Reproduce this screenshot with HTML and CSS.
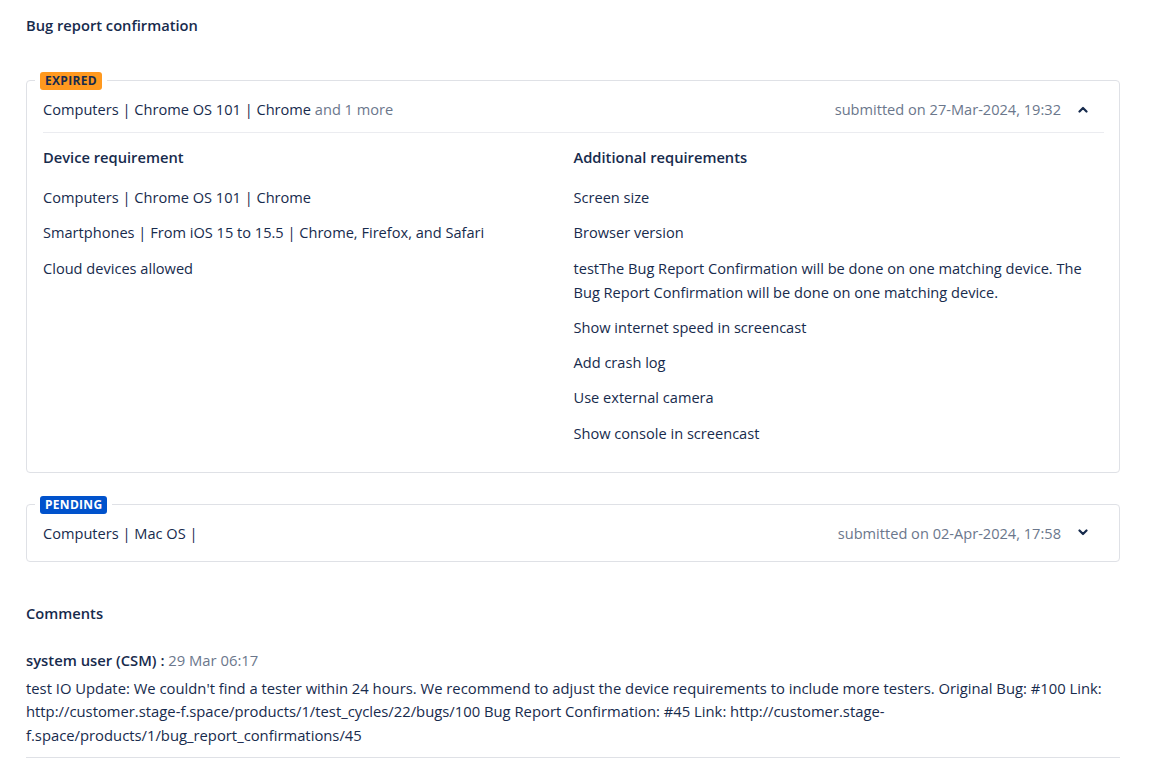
FILE: index.html
```html
<!DOCTYPE html>
<html lang="en">
<head>
<meta charset="utf-8">
<title>Bug report confirmation</title>
<link rel="stylesheet" href="styles.css">
</head>
<body>
<main class="page">
  <h2 class="section-title">Bug report confirmation</h2>

  <section class="card">
    <div class="badge-wrap"><span class="badge badge-expired">Expired</span></div>
    <div class="card-header">
      <div class="summary">Computers | Chrome OS 101 | Chrome <span class="muted">and 1 more</span></div>
      <div class="meta">
        <span class="muted">submitted on 27-Mar-2024, 19:32</span>
        <span class="chevron"><svg width="10" height="7" viewBox="0 0 10 7"><path d="M1.5 5.5 L5 2 L8.5 5.5" fill="none" stroke="#172b4d" stroke-width="2.2" stroke-linecap="round" stroke-linejoin="round"/></svg></span>
      </div>
    </div>
    <div class="card-body">
      <div class="col">
        <h3 class="col-title">Device requirement</h3>
        <ul class="req-list">
          <li>Computers | Chrome OS 101 | Chrome</li>
          <li>Smartphones | From iOS 15 to 15.5 | Chrome, Firefox, and Safari</li>
          <li>Cloud devices allowed</li>
        </ul>
      </div>
      <div class="col">
        <h3 class="col-title">Additional requirements</h3>
        <ul class="req-list">
          <li>Screen size</li>
          <li>Browser version</li>
          <li>testThe Bug Report Confirmation will be done on one matching device. The Bug Report Confirmation will be done on one matching device.</li>
          <li>Show internet speed in screencast</li>
          <li>Add crash log</li>
          <li>Use external camera</li>
          <li>Show console in screencast</li>
        </ul>
      </div>
    </div>
  </section>

  <section class="card card-collapsed">
    <div class="badge-wrap"><span class="badge badge-pending">Pending</span></div>
    <div class="card-header no-divider">
      <div class="summary">Computers | Mac OS |</div>
      <div class="meta">
        <span class="muted">submitted on 02-Apr-2024, 17:58</span>
        <span class="chevron"><svg width="10" height="7" viewBox="0 0 10 7"><path d="M1.5 1.5 L5 5 L8.5 1.5" fill="none" stroke="#172b4d" stroke-width="2.2" stroke-linecap="round" stroke-linejoin="round"/></svg></span>
      </div>
    </div>
  </section>

  <h2 class="section-title comments-title">Comments</h2>
  <article class="comment">
    <div class="comment-head"><strong>system user (CSM) :</strong> <span class="muted">29 Mar 06:17</span></div>
    <p class="comment-text">test IO Update: We couldn't find a tester within 24 hours. We recommend to adjust the device requirements to include more testers. Original Bug: #100 Link: http://customer.stage-f.space/products/1/test_cycles/22/bugs/100 Bug Report Confirmation: #45 Link: http://customer.stage-f.space/products/1/bug_report_confirmations/45</p>
  </article>
</main>
</body>
</html>
```

FILE: styles.css
```css
* { box-sizing: border-box; }

html, body {
  margin: 0;
  padding: 0;
  background: #ffffff;
}

body {
  font-family: "Open Sans", "Noto Sans", "Liberation Sans", sans-serif;
  font-size: 14px;
  color: #172b4d;
}

.page {
  width: 1094px;
  margin-left: 26px;
  padding-top: 14px;
}

.section-title {
  margin: 0;
  font-size: 14.7px;
  font-weight: 600;
  line-height: 22px;
  color: #172b4d;
}

.card {
  position: relative;
  border: 1px solid #dfe1e6;
  border-radius: 4px;
  margin-top: 44px;
  font-size: 14.6px;
}

.card-collapsed {
  margin-top: 31px;
}

.badge-wrap {
  position: absolute;
  top: -9px;
  left: 8px;
  padding: 0 5px;
  background: #ffffff;
  display: flex;
}

.badge {
  display: inline-block;
  height: 18px;
  line-height: 18px;
  padding: 0 5px;
  border-radius: 3px;
  font-size: 12px;
  font-weight: 700;
  text-transform: uppercase;
  letter-spacing: 0.3px;
}

.badge-expired {
  background: #ff991f;
  color: #172b4d;
}

.badge-pending {
  background: #0052cc;
  color: #ffffff;
}

.card-header {
  display: flex;
  justify-content: space-between;
  align-items: center;
  margin: 0 15px 0 16px;
  padding: 16px 0 11px;
  border-bottom: 1px solid #ebecf0;
  line-height: 24px;
}

.card-header.no-divider {
  border-bottom: none;
  padding-bottom: 16px;
}

.muted {
  color: #6b778c;
}

.meta {
  display: flex;
  align-items: center;
}

.chevron {
  display: flex;
  align-items: center;
  justify-content: center;
  width: 24px;
  height: 24px;
  margin-left: 10px;
  margin-right: 9px;
}

.card-body {
  display: grid;
  grid-template-columns: 1fr 1fr;
  margin: 0 15px 0 16px;
  padding: 12px 0 27px;
}

.col-title {
  margin: 0 0 16px;
  font-size: 14.7px;
  font-weight: 600;
  line-height: 24px;
}

.req-list {
  list-style: none;
  margin: 0;
  padding: 0;
  display: flex;
  flex-direction: column;
  gap: 11.3px;
}

.req-list li {
  line-height: 24px;
  padding-right: 8px;
}

.comments-title {
  margin-top: 40px;
}

.comment {
  margin-top: 25px;
  border-bottom: 1px solid #dfe1e6;
  padding-bottom: 10px;
  font-size: 14.8px;
}

.comment-head {
  line-height: 22px;
}

.comment-head strong {
  font-weight: 600;
}

.comment-text {
  margin: 6px 0 0;
  line-height: 23.5px;
}
```
